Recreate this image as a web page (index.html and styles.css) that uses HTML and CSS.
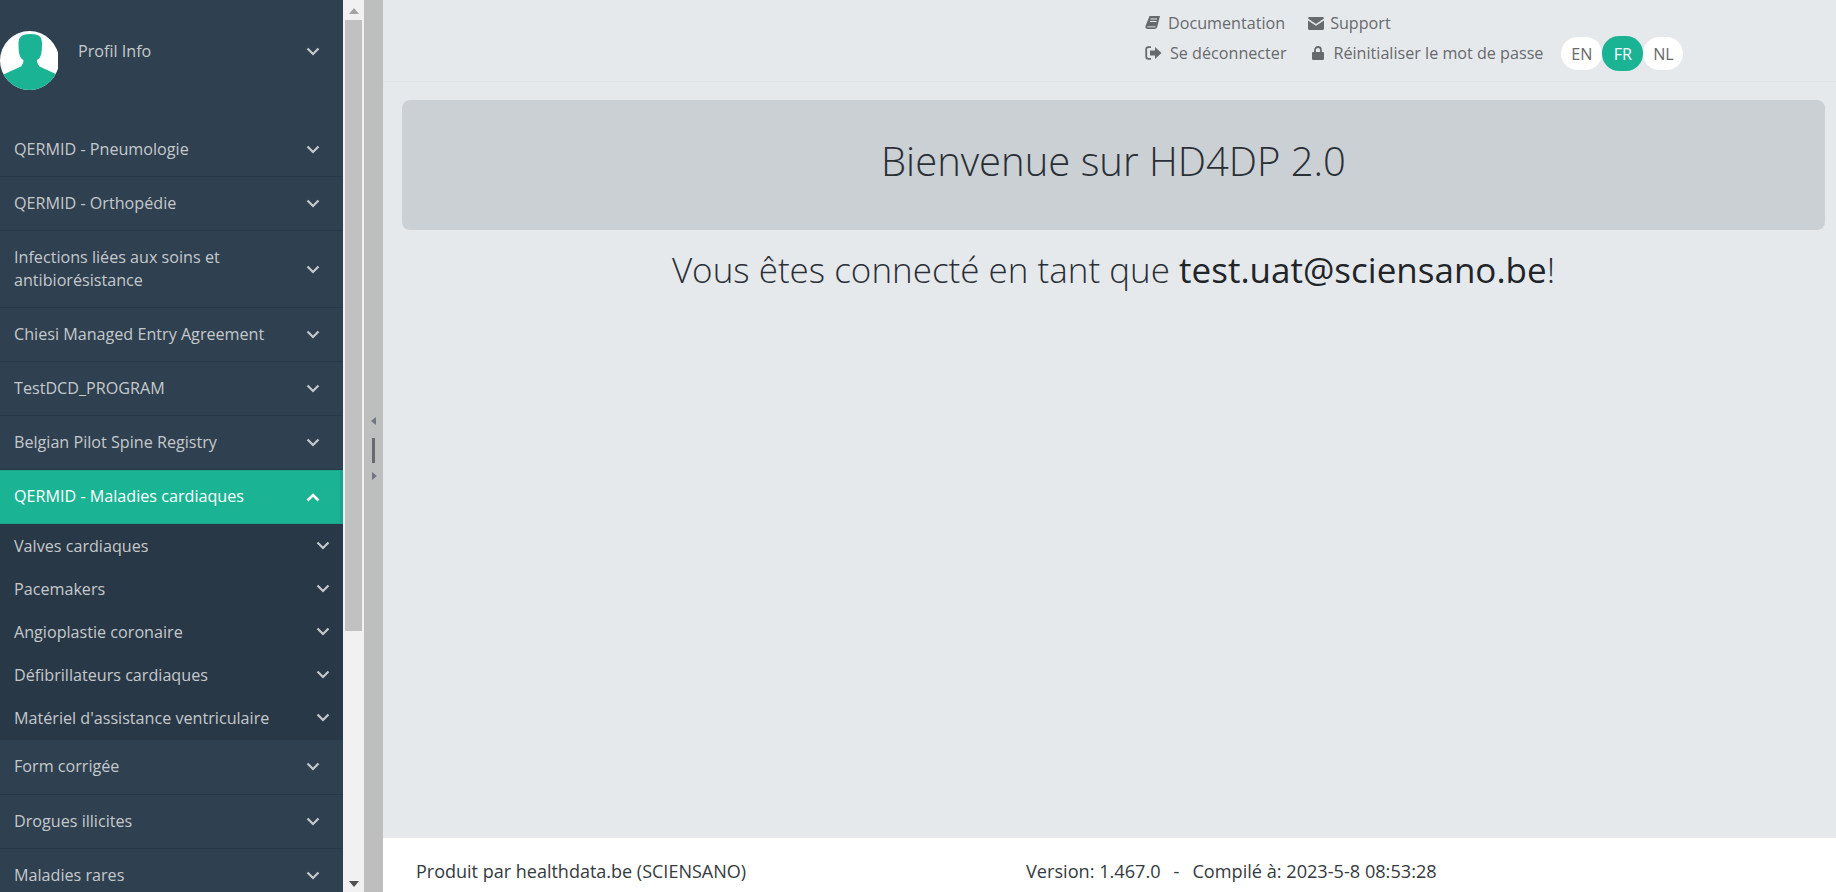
FILE: index.html
```html
<!DOCTYPE html>
<html lang="fr">
<head>
<meta charset="utf-8">
<title>HD4DP 2.0</title>
<link rel="stylesheet" href="styles.css">
</head>
<body>
<svg class="defs" width="0" height="0"><defs>
<symbol id="down" viewBox="0 0 14 9"><path d="M1.500 1.500 7 7l5.500-5.500" fill="none" stroke="currentColor" stroke-width="2.200"/></symbol>
<symbol id="up" viewBox="0 0 14 9"><path d="M1.500 7.500 7 2l5.500 5.500" fill="none" stroke="currentColor" stroke-width="2.600"/></symbol>
<clipPath id="round"><circle cx="29.500" cy="29.500" r="29.500"/></clipPath>
</defs></svg>
<div class="app">
  <aside class="sidebar">
    <div class="profile">
      <svg class="avatar" viewBox="0 0 58 59">
        <g clip-path="url(#round)">
          <rect width="60" height="59" fill="#fff"/>
          <path d="M0 45 21 35.500C23 33 23.500 31 23.500 29 20 27 18.500 24 18.500 12 18.500 6 22 3 30.500 3S42 6 42 12c0 12-1.500 15-5 17 0 2 .5 4 2.500 6.500L60 45v14H0z" fill="#1ab394"/>
        </g>
      </svg>
      <span class="profile-name">Profil Info</span>
      <svg class="chev"><use href="#down"/></svg>
    </div>
    <nav class="menu">
      <a class="item"><span>QERMID - Pneumologie</span><svg class="chev"><use href="#down"/></svg></a>
      <a class="item"><span>QERMID - Orthopédie</span><svg class="chev"><use href="#down"/></svg></a>
      <a class="item tall"><span>Infections liées aux soins et antibiorésistance</span><svg class="chev"><use href="#down"/></svg></a>
      <a class="item"><span>Chiesi Managed Entry Agreement</span><svg class="chev"><use href="#down"/></svg></a>
      <a class="item"><span>TestDCD_PROGRAM</span><svg class="chev"><use href="#down"/></svg></a>
      <a class="item"><span>Belgian Pilot Spine Registry</span><svg class="chev"><use href="#down"/></svg></a>
      <a class="item active"><span>QERMID - Maladies cardiaques</span><svg class="chev"><use href="#up"/></svg></a>
      <div class="submenu">
        <a class="subitem"><span>Valves cardiaques</span><svg class="chev"><use href="#down"/></svg></a>
        <a class="subitem"><span>Pacemakers</span><svg class="chev"><use href="#down"/></svg></a>
        <a class="subitem"><span>Angioplastie coronaire</span><svg class="chev"><use href="#down"/></svg></a>
        <a class="subitem"><span>Défibrillateurs cardiaques</span><svg class="chev"><use href="#down"/></svg></a>
        <a class="subitem"><span>Matériel d'assistance ventriculaire</span><svg class="chev"><use href="#down"/></svg></a>
      </div>
      <a class="item"><span>Form corrigée</span><svg class="chev"><use href="#down"/></svg></a>
      <a class="item"><span>Drogues illicites</span><svg class="chev"><use href="#down"/></svg></a>
      <a class="item"><span>Maladies rares</span><svg class="chev"><use href="#down"/></svg></a>
    </nav>
  </aside>
  <div class="scrollbar">
    <svg class="arrow" viewBox="0 0 10 6"><path d="M5 0 10 6H0z"/></svg>
    <div class="thumb"></div>
    <svg class="arrow arrow-down" viewBox="0 0 10 6"><path d="M0 0h10L5 6z"/></svg>
  </div>
  <div class="resizer">
    <svg class="tick tick-left" viewBox="0 0 6 8"><path d="M5 0v8L0 4z"/></svg>
    <div class="grip"></div>
    <svg class="tick tick-right" viewBox="0 0 6 8"><path d="M1 0v8l5-4z"/></svg>
  </div>
  <main class="main">
    <header class="topbar">
      <div class="links">
        <div class="link-row">
          <a class="link doc">
            <svg class="ico ico-doc" viewBox="0 0 15 14"><path d="M4.500 0H15l-2.700 10.500c-.3 1.500-1.300 2.500-2.800 2.500H3c-2 0-3-1.300-2.500-3z"/><path d="M5.500 3h6.500M5 5.500h6.500" stroke="#e6e9ec" stroke-width="1" fill="none"/><path d="M2.500 10.800h8" stroke="#e6e9ec" stroke-width=".9" fill="none"/></svg>
            Documentation</a>
          <a class="link"><svg class="ico ico-mail" viewBox="0 0 16 13"><path d="M0 1.500C0 .6.600 0 1.500 0h13c.9 0 1.500.6 1.500 1.500L8 7z"/><path d="M0 3.400 8 8.800l8-5.400v8.100c0 .9-.6 1.500-1.500 1.500h-13C.6 13 0 12.400 0 11.500z"/></svg>Support</a>
        </div>
        <div class="link-row">
          <a class="link logout"><svg class="ico ico-out" viewBox="0 0 17 14"><path d="M6 1.200H3.500C2 1.200 1.200 2 1.200 3.500v7c0 1.500.8 2.300 2.300 2.300H6" fill="none" stroke="currentColor" stroke-width="1.800"/><path d="M10 1 16.500 7 10 13V9.500H5v-5h5z"/></svg>Se déconnecter</a>
          <a class="link reset"><svg class="ico ico-lock" viewBox="0 0 12 14"><path d="M3 6.500V4.200C3 2.200 4.200 1 6 1s3 1.200 3 3.200v2.300" fill="none" stroke="currentColor" stroke-width="1.800"/><rect y="6" width="12" height="8" rx="1"/></svg>Réinitialiser le mot de passe</a>
          <div class="langs">
            <button class="lang">EN</button>
            <button class="lang on">FR</button>
            <button class="lang">NL</button>
          </div>
        </div>
      </div>
    </header>
    <div class="content">
      <section class="jumbo"><h1>Bienvenue sur HD4DP 2.0</h1></section>
      <h2 class="connected">Vous êtes connecté en tant que <b>test.uat@sciensano.be</b>!</h2>
    </div>
    <footer class="footer">
      <span class="producer">Produit par healthdata.be (SCIENSANO)</span>
      <span class="version">Version: 1.467.0<span class="sep">-</span>Compilé à: 2023-5-8 08:53:28</span>
    </footer>
  </main>
</div>
</body>
</html>
```

FILE: styles.css
```css
* { box-sizing: border-box; }
html, body { margin: 0; height: 100%; overflow: hidden; }
body { font-family: "Open Sans", sans-serif; font-size: 16.150px; color: #676a6c; background: #e6e9ec; }
.defs { position: absolute; }
.app { display: flex; height: 892px; }

.sidebar { width: 343px; flex: none; height: 892px; overflow: hidden; background: #2f4050; color: #c5c9cc; }
.chev { width: 14px; height: 9px; flex: none; color: #c5c9cc; }
.profile { display: flex; align-items: center; height: 123px; padding: 31px 23px 33px 1px; }
.avatar { width: 58px; height: 59px; flex: none; margin-left: -1px; }
.profile-name { flex: 1; margin: -20px 0 0 20px; }
.profile .chev { margin-top: -18px; }
.item { display: flex; align-items: center; justify-content: space-between; height: 54px; padding: 0 23px 0 14px; border-bottom: 1px solid #293846; line-height: 23.500px; }
.item span { max-width: 260px; }
.tall { height: 77px; }
.active { background: #1ab394; color: #fff; border-right: 3px solid #18a689; border-top: 1px solid #18a689; border-bottom: 1px solid #18a689; }
.active .chev { color: #fff; margin-right: -3px; }
.submenu { background: #293846; height: 216px; padding-bottom: 1px; }
.submenu ~ .item { height: 54.500px; }
.subitem { display: flex; align-items: center; justify-content: space-between; height: 43px; padding: 0 13px 0 14px; }

.scrollbar { width: 21px; flex: none; background: #f1f1f1; display: flex; flex-direction: column; align-items: center; padding: 8px 0 5px; }
.arrow { width: 10px; height: 6px; fill: #a3a3a3; flex: none; }
.arrow-down { fill: #505050; }
.thumb { width: 17px; height: 611px; margin: 6px 0 auto; background: #c1c1c1; }

.resizer { width: 19px; flex: none; background: #bebebe; display: flex; flex-direction: column; align-items: center; justify-content: center; padding-top: 4px; }
.tick { width: 6px; height: 8px; fill: #6f7680; }
.tick-left { margin-bottom: 13px; }
.tick-right { margin-top: 9px; }
.grip { width: 3px; height: 25px; background: #676b70; }

.main { flex: 1; min-width: 0; display: flex; flex-direction: column; height: 892px; }
.topbar { height: 82px; border-bottom: 1px solid #dfe3e6; padding: 11px 0 0 762px; flex: none; }
.links { display: flex; flex-direction: column; gap: 1px; }
.link-row { display: flex; align-items: center; }
.link-row:first-child { height: 24px; }
.link { display: flex; align-items: center; color: #676a6c; white-space: nowrap; }
.ico { fill: currentColor; flex: none; }
.ico-doc { width: 15px; height: 14px; margin-right: 8px; }
.ico-mail { width: 16px; height: 13px; margin-right: 6px; }
.ico-out { width: 17px; height: 14px; margin-right: 8px; }
.ico-lock { width: 12px; height: 14px; margin-right: 10px; }
.doc { margin-right: 23px; }
.logout { margin: -2px 25px 0 0; }
.reset { margin: -2px 18px 0 0; }
.langs { display: flex; align-items: center; }
.lang { font: inherit; width: 41px; height: 33px; border: 0; padding: 0; border-radius: 17px; background: #fff; color: #676a6c; }
.lang:last-child { width: 40px; }
.lang.on { height: 35px; background: #1ab394; color: #fff; position: relative; }

.content { flex: 1; padding: 18px 11px 0 19px; }
.jumbo { height: 130px; background: #cbd0d4; border-radius: 8px; display: flex; align-items: center; justify-content: center; padding-bottom: 9px; }
h1 { margin: 0; font-size: 40px; font-weight: 300; color: #2a2f36; }
.connected { margin: 16px 0 0; text-align: center; font-size: 35px; line-height: 48px; font-weight: 300; color: #2a2f36; }
.connected b { font-weight: 400; color: #212529; }

.footer { height: 55px; flex: none; background: #fff; border-top: 1px solid #e7eaec; display: flex; align-items: center; padding: 12px 0 0 33px; font-size: 18px; color: #333a40; }
.producer { width: 610px; }
.version { font-size: 18.150px; }
.sep { margin: 0 13px; }
```
